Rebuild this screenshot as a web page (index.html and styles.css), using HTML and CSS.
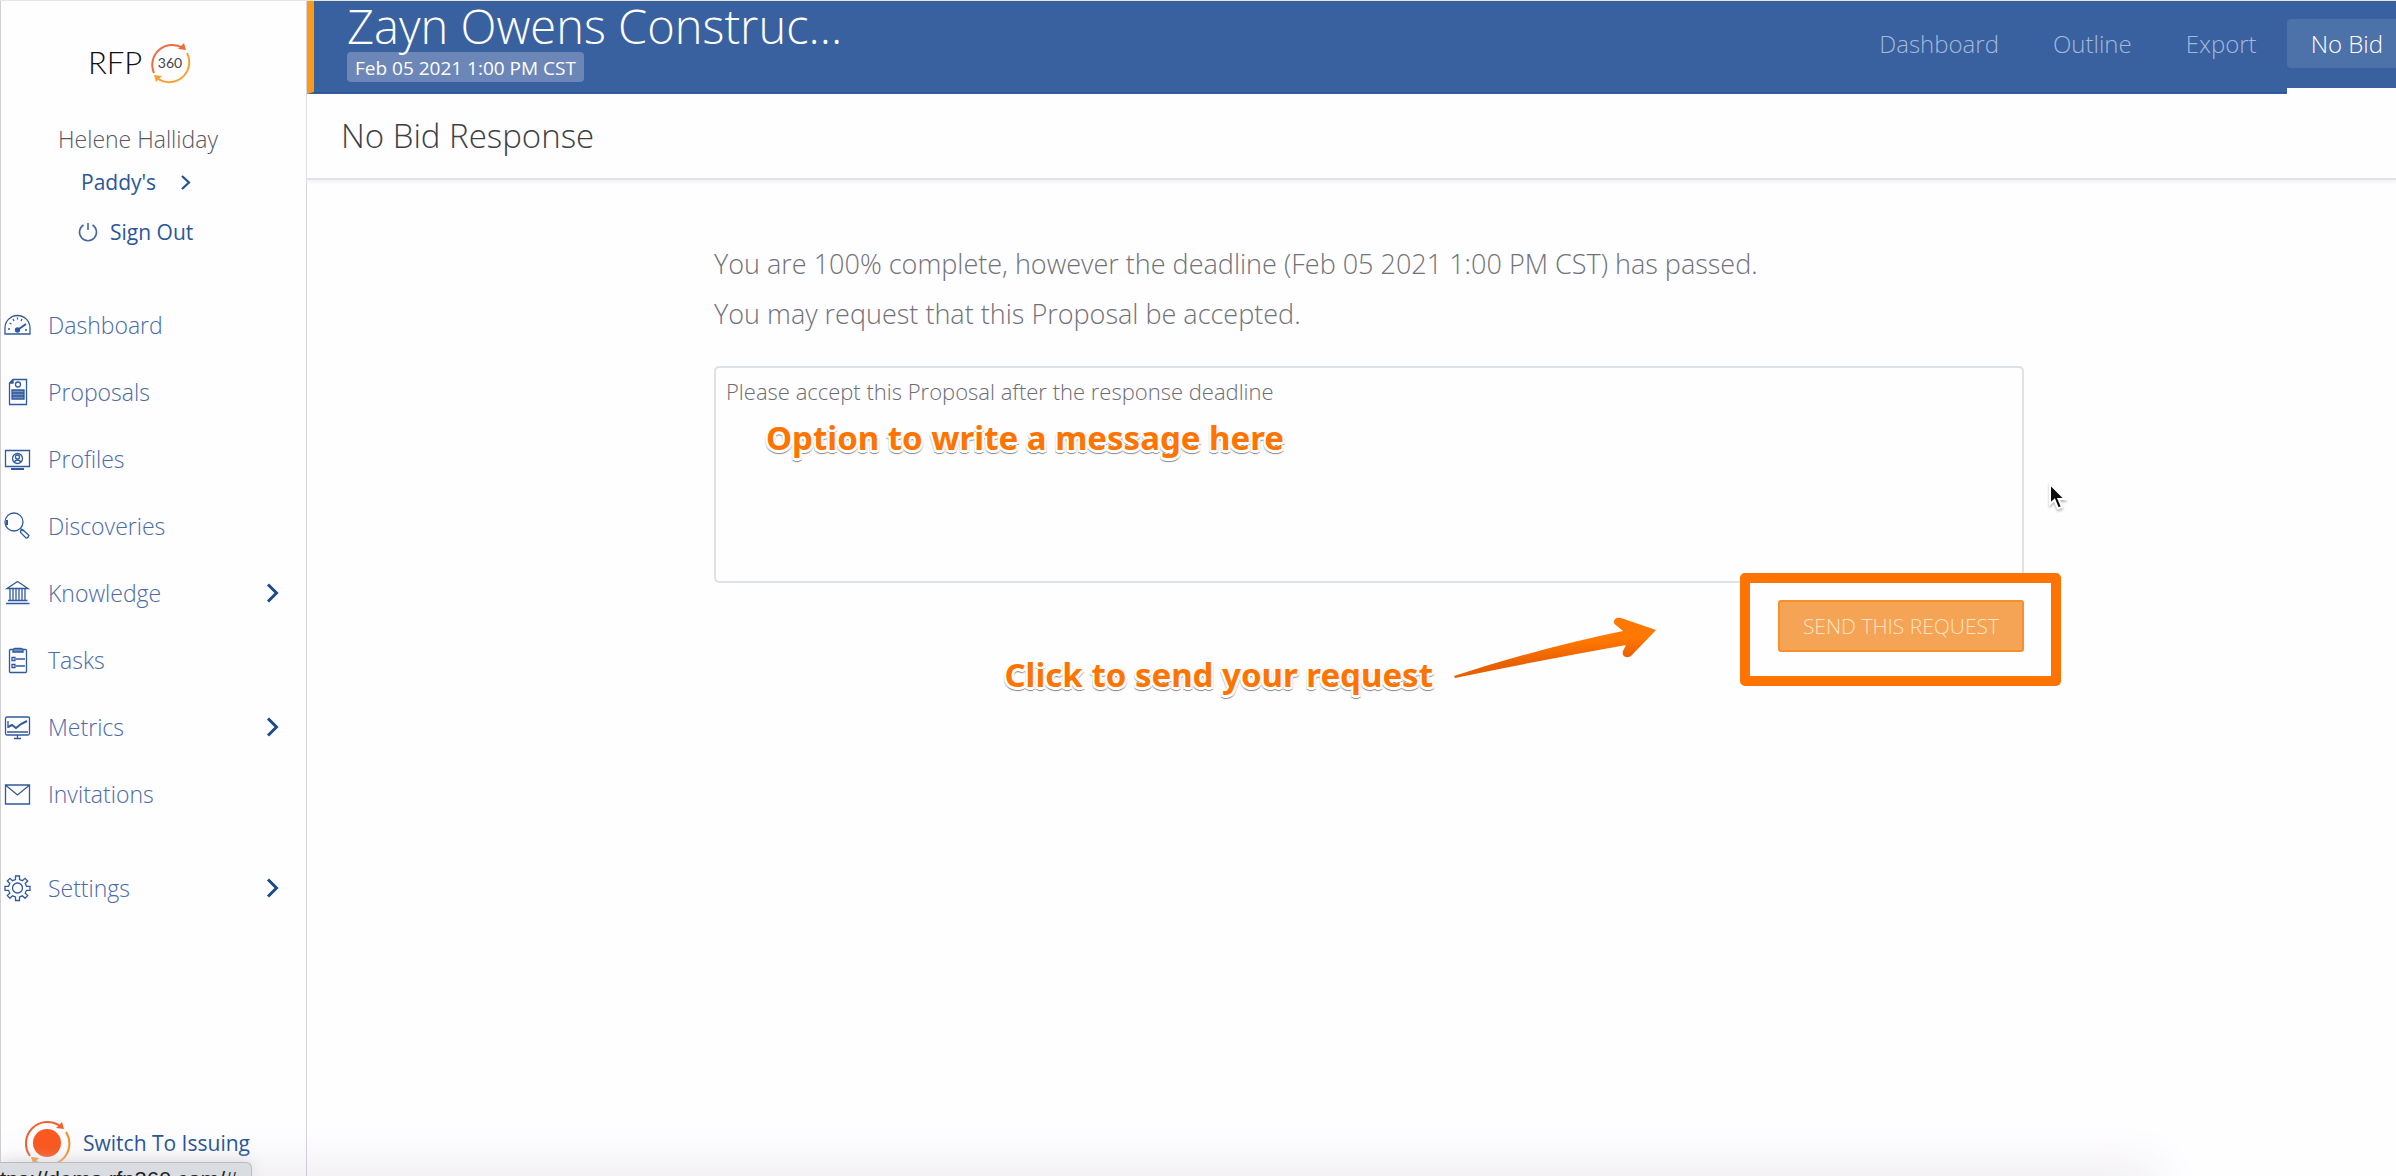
FILE: index.html
```html
<!DOCTYPE html>
<html lang="en">
<head>
<meta charset="utf-8">
<title>No Bid Response</title>
<link rel="stylesheet" href="styles.css">
</head>
<body>
<div class="app">

<aside class="sidebar">
  <a class="logo" href="#" aria-label="RFP360">
    <svg width="104" height="46" viewBox="0 0 104 46">
      <text class="logo-name" x="-1" y="34">RFP</text>
      <text class="logo-num" x="81" y="28" text-anchor="middle">360</text>
      <g fill="none" stroke-width="2">
        <path d="M65 33A20 20 0 0 1 94 8" stroke="#f26a3d"/>
        <path d="M98 13A20 20 0 0 1 68 38" stroke="#f9a12f"/>
      </g>
      <path d="M97 10L89 9L95 3z" fill="#f26a3d"/>
      <path d="M65 35L73 36L67 42z" fill="#f9a12f"/>
    </svg>
  </a>
  <div class="user">Helene Halliday</div>
  <a class="company" href="#">Paddy's
    <svg width="10" height="15" viewBox="0 0 10 15"><path d="M1 1L8 7.500L1 14" fill="none" stroke="#24508f" stroke-width="2.200"/></svg>
  </a>
  <a class="signout" href="#">
    <svg width="20" height="20" viewBox="0 0 20 20" fill="none" stroke="#44699f" stroke-width="1.600"><path d="M5.500 3A8.500 8.500 0 1 0 14.500 3M10 1V8"/></svg>
    Sign Out
  </a>

  <nav>
    <ul class="menu">
      <li><a href="#">
        <svg class="icon" viewBox="0 0 28 28"><path d="M2 23V17A12.500 12.500 0 0 1 27 17V23z"/><path d="M14.500 19L23 13" stroke-width="2"/><circle cx="14.500" cy="19" r="2" fill="#2f5a9b"/><path d="M5 18h2M22 19h2M6.500 12l2 1M10 8l1 2M14.500 6.500v2M19 8l-1 2"/></svg>
        Dashboard</a></li>
      <li><a href="#">
        <svg class="icon" viewBox="0 0 28 28"><path d="M10 1.500H23.500V26.500H6.500V5z"/><path d="M6.500 5H10V1.500" fill="#2f5a9b"/><circle cx="15" cy="6.500" r="2.500"/><path d="M9 12h12v9H9z" fill="#7592c2"/><path d="M9 15h12M9 18h12"/></svg>
        Proposals</a></li>
      <li><a href="#">
        <svg class="icon" viewBox="0 0 28 28"><path d="M2.500 5.500H26.500V21.500H2.500zM11 24h7" /><circle cx="14.500" cy="13.500" r="5"/><circle cx="14.500" cy="12" r="2"/><path d="M11 17q3.500-4 7 0" /><path d="M8 24h13" stroke-width="2"/></svg>
        Profiles</a></li>
      <li><a href="#">
        <svg class="icon" viewBox="0 0 28 28"><circle cx="11" cy="10" r="9"/><path d="M4 8v5" stroke-width="2"/><path d="M17 16l3 3"/><path d="M19.500 17.500q-2.500 1-2 3l5.500 5.500q2 .5 3-2.500z"/></svg>
        Discoveries</a></li>
      <li><a href="#">
        <svg class="icon" viewBox="0 0 28 28"><path d="M4 9.500L14.500 2.500L25 9.500z"/><path d="M3 24.500H26.500M5 21.500H24.500M7 10v11M10 10v11M13 10v11M16 10v11M19 10v11M22 10v11"/></svg>
        Knowledge
        <svg class="chevron" viewBox="0 0 14 20"><path d="M2 1.500L10.500 10L2 18.500"/></svg></a></li>
      <li><a href="#">
        <svg class="icon" viewBox="0 0 28 28"><rect x="6.500" y="3.500" width="17" height="23" rx="1"/><path d="M10 3.500l2-1h6l2 1v2.500h-10z" fill="#7592c2"/><path d="M9 11.500h3v3H9zM9 18.500h3v3H9zM13 13h9M13 20h9"/></svg>
        Tasks</a></li>
      <li><a href="#">
        <svg class="icon" viewBox="0 0 28 28"><rect x="2.500" y="4" width="24" height="18" rx="1.500"/><path d="M5 14l4-2 4 3 5-4 6-3" stroke-width="2"/><path d="M5 8v7M4 19h21M14.500 22v3M11 25.500h7"/></svg>
        Metrics
        <svg class="chevron" viewBox="0 0 14 20"><path d="M2 1.500L10.500 10L2 18.500"/></svg></a></li>
      <li><a href="#">
        <svg class="icon" viewBox="0 0 28 28"><path d="M2.500 5H26.500V24H2.500zM3 5.500L14.500 15L26 5.500"/></svg>
        Invitations</a></li>
      <li class="apart"><a href="#">
        <svg class="icon" viewBox="0 0 28 28"><circle cx="14.500" cy="14" r="5"/><path d="M12.500 2h4v3.500l3 1.200L22 4.300 24.700 7l-2.500 2.500 1.300 2.800H27v4h-3.500l-1.300 2.800 2.500 2.500-2.700 2.700-2.500-2.500-3 1.200V26.500h-4V23l-3-1.200L7 24.300 4.300 21.600l2.500-2.500-1.300-2.800H2v-4h3.500l1.300-2.800L4.300 7 7 4.300l2.500 2.400 3-1.200z"/></svg>
        Settings
        <svg class="chevron" viewBox="0 0 14 20"><path d="M2 1.500L10.500 10L2 18.500"/></svg></a></li>
    </ul>
  </nav>

  <a class="switch" href="#">
    <svg width="48" height="48" viewBox="0 0 48 48">
      <circle cx="24" cy="24" r="14" fill="#fb5a21"/>
      <g fill="none" stroke-width="2">
        <path d="M7 37A21.500 21.500 0 0 1 37 7" stroke="#f1622f"/>
        <path d="M43 13A21.500 21.500 0 0 1 11 41" stroke="#f5921f"/>
      </g>
      <path d="M41 10L33 9L39 3z" fill="#f1622f"/>
      <path d="M8 38L16 39L10 45z" fill="#f5921f"/>
    </svg>
    Switch To Issuing
  </a>
</aside>

<main class="main">
  <header class="topbar">
    <div class="project">
      <h1>Zayn Owens Construc...</h1>
      <span class="due">Feb 05 2021 1:00 PM CST</span>
    </div>
    <nav class="tabs">
      <a href="#">Dashboard</a>
      <a href="#">Outline</a>
      <a href="#">Export</a>
      <a class="active" href="#"><span>No Bid</span></a>
    </nav>
  </header>
  <h2 class="subhead">No Bid Response</h2>

  <div class="content">
    <form class="request">
      <p>You are 100% complete, however the deadline (Feb 05 2021 1:00 PM CST) has passed.</p>
      <p>You may request that this Proposal be accepted.</p>
      <div class="message">
        <textarea aria-label="Message">Please accept this Proposal after the response deadline</textarea>
        <span class="note note-message">Option to write a message here</span>
        <svg class="cursor" width="22" height="32" viewBox="0 0 22 32"><path d="M3 2V22L7.500 18L11 26.500L15 25L11.500 17H18z" fill="#0c0c0c" stroke="#fff" stroke-width="2"/></svg>
      </div>
      <div class="actions">
        <div class="note-send">
          <span class="note">Click to send your request</span>
          <svg width="206" height="64" viewBox="0 0 206 64">
            <defs><linearGradient id="arrow" x1="0" y1="0" x2=".2" y2="1"><stop offset=".5" stop-color="#ff7800"/><stop offset=".8" stop-color="#e85f00"/></linearGradient></defs>
            <path d="M2 60Q88 32 171 15L165 10Q160 8 163 3Q165 1 169 2L204 14L179 40Q174 43 171 39Q170 36 172 33L174 29Q90 44 3 62z" fill="url(#arrow)"/>
          </svg>
        </div>
        <div class="highlight">
          <button type="submit">SEND THIS REQUEST</button>
        </div>
      </div>
    </form>
  </div>
</main>

<div class="edge-shadow"></div>
<div class="statusbar">tps://demo.rfp360.com/#</div>
</div>
</body>
</html>
```
FILE: styles.css
```css
* { box-sizing: border-box; }

body {
  margin: 0;
  background: #fefdff;
  color: #58585c;
  font: 300 24px/32px "Open Sans", "Noto Sans", sans-serif;
}
a { color: #2b5797; text-decoration: none; }
h1, h2, p, ul { margin: 0; padding: 0; font-weight: 300; }
ul { list-style: none; }

.app {
  display: flex;
  position: relative;
  min-height: 100vh;
  overflow: hidden;
  border-top: 1px solid #e6e6e6;
}

/* sidebar */
.sidebar {
  display: flex;
  flex-direction: column;
  flex: none;
  width: 307px;
  padding: 39px 0 9px;
  border-left: 1px solid #cfcfcf;
  border-right: 1px solid #d9d4e0;
  font-size: 23px;
}
.logo { height: 46px; padding-left: 88px; }
.logo svg { overflow: visible; }
.logo-name { font: 300 31px Lato, sans-serif; fill: #111; }
.logo-num { font: 400 14px Lato, sans-serif; fill: #444; }
.user { margin-top: 37px; padding-left: 57px; }
.company, .signout, .switch { display: flex; align-items: center; font-size: 21px; font-weight: 400; }
.company { gap: 25px; margin-top: 11px; padding-left: 80px; }
.signout { gap: 12px; margin-top: 18px; padding-left: 77px; }

.menu { margin-top: 43px; }
.menu a { display: flex; align-items: center; height: 67px; padding: 0 26px 0 2px; color: #4a6ba3; }
.menu .apart { margin-top: 27px; }
.icon { width: 28px; height: 28px; margin-right: 17px; fill: none; stroke: #2f5a9b; stroke-width: 1.3; }
.chevron { width: 14px; height: 20px; margin-left: auto; fill: none; stroke: #1f4a8a; stroke-width: 3; }
.switch { gap: 12px; margin-top: auto; padding-left: 22px; }

/* top bar */
.main { flex: 1; min-width: 0; }
.topbar {
  display: flex;
  justify-content: space-between;
  height: 93px;
  border-left: 7px solid #fc9a17;
  border-bottom: 2px solid #1f4f93;
  background: #3a619f;
}
.project { padding-left: 33px; color: #fff; }
.project h1 { height: 51px; font-size: 47px; line-height: 50px; color: #fff; }
.due {
  display: block;
  width: max-content;
  height: 30px;
  padding: 0 8px;
  border-radius: 4px;
  background: #6c87b7;
  font-size: 19px;
  font-weight: 400;
  line-height: 32px;
}
.tabs { display: flex; gap: 6px; margin-right: -11px; padding-top: 18px; }
.tabs a { height: 49px; padding: 0 24px; color: #a3b8dc; line-height: 50px; }
.tabs .active { height: 75px; padding: 0; border-bottom: 6px solid #fefdff; color: #fff; }
.tabs .active span { display: block; height: 49px; padding: 0 24px; border-radius: 4px; background: #4d71a9; }

.subhead {
  height: 86px;
  padding-left: 34px;
  border-bottom: 2px solid #e2e1e5;
  box-shadow: 0 2px 4px #f1f0f3;
  color: #3f3f43;
  font-size: 33px;
  line-height: 84px;
}

/* request form */
.content { display: grid; grid-template-columns: 407fr 1310fr 372fr; padding-top: 59px; }
.request { grid-column: 2; }
.request p { font-size: 27px; line-height: 50px; color: #727276; }
.message { position: relative; margin-top: 27px; }
textarea {
  display: block;
  width: 100%;
  height: 217px;
  padding: 8px 10px;
  border: 2px solid #dde2e7;
  border-radius: 5px;
  background: #fefdff;
  color: #6c6c70;
  font: 300 22px/30px "Open Sans", "Noto Sans", sans-serif;
}
.actions { display: flex; position: relative; justify-content: flex-end; padding-top: 17px; }
button {
  height: 52px;
  padding: 0 23px;
  border: 2px solid #f78f2c;
  border-radius: 3px;
  background: #f5a355;
  color: #ffe3c2;
  font: 300 21px "Open Sans", "Noto Sans", sans-serif;
}

/* callouts drawn over the form */
.note {
  color: #ff7400;
  font: 700 33px/44px "Noto Sans", "Open Sans", sans-serif;
  white-space: nowrap;
  text-shadow: 0 2px 0 #fff, 2px 0 0 #fff, -2px 0 0 #fff, 2px 2px 0 #fff, -2px 2px 0 #fff, 0 3px 0 #fff, 0 4px 1px #888, 2px 3px 1px #999, -2px 3px 1px #999;
}
.note-message { position: absolute; top: 50px; left: 52px; }
.note-send { display: flex; position: absolute; top: 33px; right: 366px; gap: 19px; }
.note-send .note { padding-top: 37px; }
.highlight { position: relative; }
.highlight::after {
  content: "";
  position: absolute;
  inset: -27px -37px -34px -38px;
  border: 10px solid #ff7400;
  border-radius: 5px;
  pointer-events: none;
}
.cursor { position: absolute; top: 116px; right: -45px; filter: drop-shadow(0 2px 1px #bbb); }

/* browser link preview */
.statusbar {
  position: absolute;
  bottom: 0;
  left: 0;
  width: 252px;
  height: 14px;
  overflow: hidden;
  border: 1px solid #b9bbbf;
  border-width: 1px 1px 0 0;
  border-radius: 0 6px 0 0;
  background: #d9dce0;
  box-shadow: 0 0 14px #d5d3d8;
  color: #222;
  font: 400 22px/34px "Liberation Sans", sans-serif;
  white-space: nowrap;
}
.edge-shadow {
  position: absolute;
  bottom: -20px;
  left: 0;
  width: 90%;
  height: 20px;
  box-shadow: 0 0 50px rgba(60, 50, 80, .18);
  pointer-events: none;
}
```
